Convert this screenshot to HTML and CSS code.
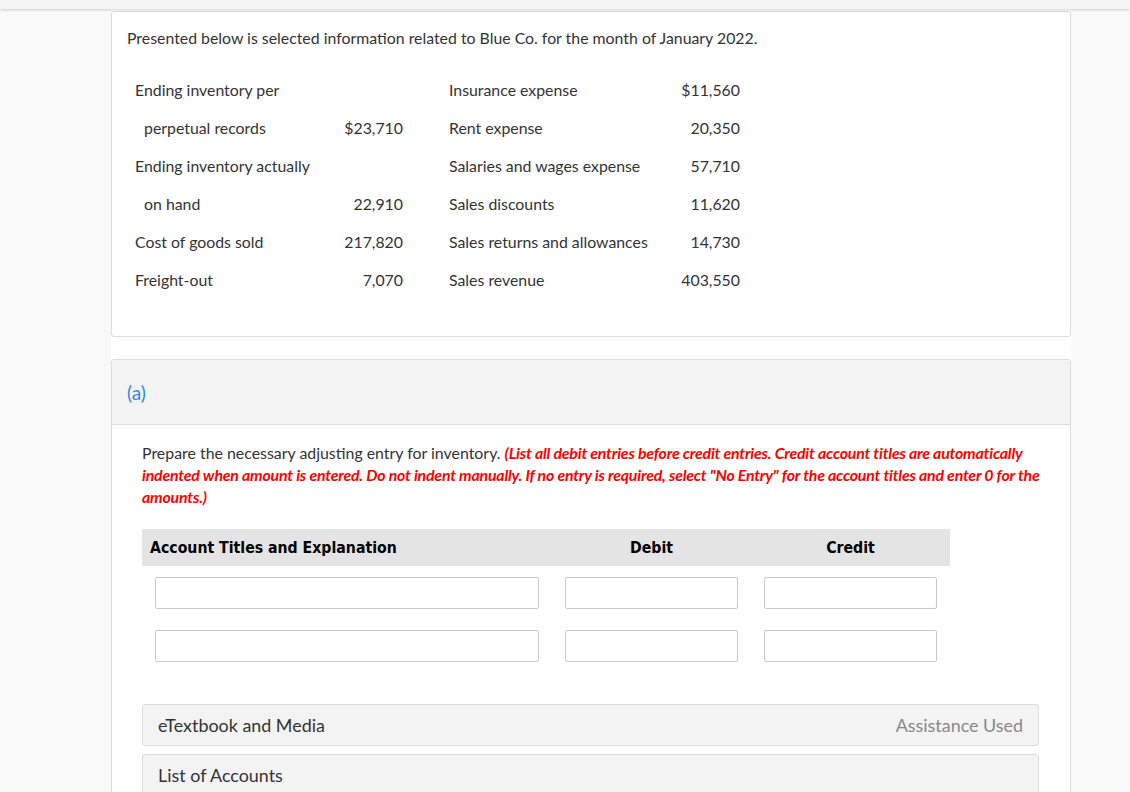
FILE: index.html
```html
<!DOCTYPE html>
<html>
<head>
<meta charset="utf-8">
<link rel="stylesheet" href="styles.css">
</head>
<body>
<div class="topbar"></div>
<div class="main">
  <div class="card info">
    <p class="intro">Presented below is selected information related to Blue Co. for the month of January 2022.</p>
    <div class="data">
      <div class="lbl">Ending inventory per</div><div class="amt"></div><div class="sp"></div><div class="lbl">Insurance expense</div><div class="amt">$11,560</div>
      <div class="lbl ind">perpetual records</div><div class="amt">$23,710</div><div class="sp"></div><div class="lbl">Rent expense</div><div class="amt">20,350</div>
      <div class="lbl">Ending inventory actually</div><div class="amt"></div><div class="sp"></div><div class="lbl">Salaries and wages expense</div><div class="amt">57,710</div>
      <div class="lbl ind">on hand</div><div class="amt">22,910</div><div class="sp"></div><div class="lbl">Sales discounts</div><div class="amt">11,620</div>
      <div class="lbl">Cost of goods sold</div><div class="amt">217,820</div><div class="sp"></div><div class="lbl">Sales returns and allowances</div><div class="amt">14,730</div>
      <div class="lbl">Freight-out</div><div class="amt">7,070</div><div class="sp"></div><div class="lbl">Sales revenue</div><div class="amt">403,550</div>
    </div>
  </div>
  <div class="card part">
    <div class="part-head"><span class="part-label">(a)</span></div>
    <div class="part-body">
      <p class="instr">Prepare the necessary adjusting entry for inventory. <em class="warn">(List all debit entries before credit entries. Credit account titles are automatically indented when amount is entered. Do not indent manually. If no entry is required, select "No Entry" for the account titles and enter 0 for the amounts.)</em></p>
      <div class="journal">
        <div class="jh jh-acc">Account Titles and Explanation</div>
        <div class="jh jh-num">Debit</div>
        <div class="jh jh-num">Credit</div>
        <div class="jc"><div class="inp"></div></div>
        <div class="jc"><div class="inp"></div></div>
        <div class="jc"><div class="inp"></div></div>
        <div class="jc"><div class="inp"></div></div>
        <div class="jc"><div class="inp"></div></div>
        <div class="jc"><div class="inp"></div></div>
      </div>
      <div class="panel first"><span>eTextbook and Media</span><span class="assist">Assistance Used</span></div>
      <div class="panel"><span>List of Accounts</span></div>
    </div>
  </div>
</div>
</body>
</html>
```

FILE: styles.css
```css
html, body {
  margin: 0;
  padding: 0;
  background: #f9f9f9;
  font-family: Lato, "Open Sans", sans-serif;
  color: #333;
  height: 792px;
  overflow: hidden;
}
.topbar {
  height: 9px;
  background: #f5f5f5;
  box-shadow: 0 1px 3px rgba(0,0,0,0.18);
  position: relative;
  z-index: 2;
}
.main {
  width: 960px;
  margin-left: 111px;
  background: #fff;
  padding-top: 2px;
  height: 781px;
  overflow: hidden;
}
.card {
  border: 1px solid #dcdcdc;
  border-radius: 3px;
  background: #fff;
}
.info {
  height: 324px;
  box-sizing: content-box;
}
.intro {
  margin: 0;
  padding: 15px 15px 0 15px;
  font-size: 15.85px;
  line-height: 22px;
}
.data {
  margin: 21px 0 0 23px;
  display: grid;
  grid-template-columns: 200px 68px 46px 220px 71px;
  grid-auto-rows: 38px;
  font-size: 15.85px;
}
.data > div {
  display: flex;
  align-items: center;
  white-space: nowrap;
}
.data .amt {
  justify-content: flex-end;
}
.data .ind {
  padding-left: 9px;
}
.part {
  margin-top: 22px;
}
.part-head {
  height: 64px;
  background: #f3f3f3;
  border-bottom: 1px solid #dcdcdc;
  display: flex;
  align-items: center;
  padding-left: 15px;
}
.part-label {
  color: #2a8be0;
  font-size: 19px;
}
.part-body {
  padding: 17px 30px 60px 30px;
}
.instr {
  margin: 0;
  font-size: 15.9px;
  line-height: 22px;
}
.warn {
  color: #f00;
  font-weight: bold;
  font-style: italic;
  letter-spacing: -0.2px;
}
.journal {
  margin-top: 21px;
  width: 808px;
  display: grid;
  grid-template-columns: 410px 199px 199px;
}
.jh {
  background: #e4e4e4;
  height: 37px;
  display: flex;
  align-items: center;
  font-family: "DejaVu Sans Condensed", "DejaVu Sans", sans-serif;
  font-weight: bold;
  font-size: 15.7px;
  color: #000;
}
.jh-acc {
  padding-left: 8px;
}
.jh-num {
  justify-content: center;
}
.jc {
  padding: 11px 13px 10px 13px;
}
.inp {
  height: 30px;
  border: 1px solid #c8c8c8;
  border-radius: 2px;
  background: #fff;
}
.panel {
  width: 897px;
  box-sizing: border-box;
  height: 42px;
  background: #f3f3f3;
  border: 1px solid #dcdcdc;
  border-radius: 3px;
  display: flex;
  align-items: center;
  justify-content: space-between;
  padding: 0 15px;
  font-size: 17.9px;
  margin-top: 8px;
}
.panel.first {
  margin-top: 32px;
}
.assist {
  color: #888;
}
```
